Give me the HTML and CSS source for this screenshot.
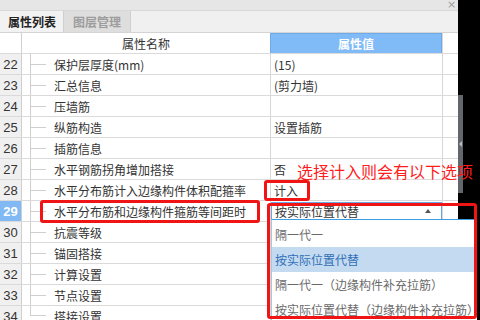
FILE: index.html
```html
<!DOCTYPE html>
<html lang="zh">
<head>
    <meta charset="UTF-8">
    <meta name="viewport" content="width=device-width, initial-scale=1.0">
    <title>属性列表</title>
    <link rel="stylesheet" href="styles.css">
</head>
<body>
    <div class="screen">
        <div class="panel">
            <div class="titlebar"><span class="close">×</span></div>
            <div class="tabs">
                <div class="tab active">属性列表</div>
                <div class="tab">图层管理</div>
            </div>
            <div class="grid">
                <div class="row head">
                    <div class="num"></div>
                    <div class="name">属性名称</div>
                    <div class="value">属性值</div>
                    <div class="pad"></div>
                </div>
                <div class="row">
                    <div class="num">22</div>
                    <div class="name"><span class="tree"><i></i></span>保护层厚度(mm)</div>
                    <div class="value">(15)</div>
                    <div class="pad"></div>
                </div>
                <div class="row">
                    <div class="num">23</div>
                    <div class="name"><span class="tree"><i></i></span>汇总信息</div>
                    <div class="value">(剪力墙)</div>
                    <div class="pad"></div>
                </div>
                <div class="row">
                    <div class="num">24</div>
                    <div class="name"><span class="tree"><i></i></span>压墙筋</div>
                    <div class="value"></div>
                    <div class="pad"></div>
                </div>
                <div class="row">
                    <div class="num">25</div>
                    <div class="name"><span class="tree"><i></i></span>纵筋构造</div>
                    <div class="value">设置插筋</div>
                    <div class="pad"></div>
                </div>
                <div class="row">
                    <div class="num">26</div>
                    <div class="name"><span class="tree"><i></i></span>插筋信息</div>
                    <div class="value"></div>
                    <div class="pad"></div>
                </div>
                <div class="row">
                    <div class="num">27</div>
                    <div class="name"><span class="tree"><i></i></span>水平钢筋拐角增加搭接</div>
                    <div class="value">否</div>
                    <div class="pad"></div>
                </div>
                <div class="row">
                    <div class="num">28</div>
                    <div class="name"><span class="tree"><i></i></span>水平分布筋计入边缘构件体积配箍率</div>
                    <div class="value">计入</div>
                    <div class="pad"></div>
                </div>
                <div class="row current">
                    <div class="num">29</div>
                    <div class="name"><span class="tree"><i></i></span>水平分布筋和边缘构件箍筋等间距时</div>
                    <div class="value">
                        <div class="select"><span>按实际位置代替</span><span class="caret"></span></div>
                    </div>
                    <div class="pad"></div>
                </div>
                <div class="row">
                    <div class="num">30</div>
                    <div class="name"><span class="tree"><i></i></span>抗震等级</div>
                    <div class="value"></div>
                    <div class="pad"></div>
                </div>
                <div class="row">
                    <div class="num">31</div>
                    <div class="name"><span class="tree"><i></i></span>锚固搭接</div>
                    <div class="value"></div>
                    <div class="pad"></div>
                </div>
                <div class="row">
                    <div class="num">32</div>
                    <div class="name"><span class="tree"><i></i></span>计算设置</div>
                    <div class="value"></div>
                    <div class="pad"></div>
                </div>
                <div class="row">
                    <div class="num">33</div>
                    <div class="name"><span class="tree"><i></i></span>节点设置</div>
                    <div class="value"></div>
                    <div class="pad"></div>
                </div>
                <div class="row">
                    <div class="num">34</div>
                    <div class="name"><span class="tree last"><i></i></span>搭接设置</div>
                    <div class="value"></div>
                    <div class="pad"></div>
                </div>
            </div>
        </div>
        <div class="side"><div class="thumb"><span class="arrow"></span></div></div>

        <ul class="dropdown">
            <li>隔一代一</li>
            <li class="selected">按实际位置代替</li>
            <li>隔一代一（边缘构件补充拉筋）</li>
            <li>按实际位置代替（边缘构件补充拉筋）</li>
        </ul>

        <div class="note">选择计入则会有以下选项</div>
        <div class="mark mark-value"></div>
        <div class="mark mark-name"></div>
        <div class="mark mark-list"></div>
    </div>
</body>
</html>
```

FILE: styles.css
```css
body {
    margin: 0;
    background-color: #000;
    font-family: "Noto Sans CJK SC", "Noto Sans", sans-serif;
    font-size: 12px;
    color: #333;
}
.screen {
    position: relative;
    display: flex;
    width: 480px;
    height: 320px;
    overflow: hidden;
}
.panel {
    width: 458px;
    background-color: #fff;
    display: flex;
    flex-direction: column;
    overflow: hidden;
}
.panel > * {
    flex-shrink: 0;
}
.titlebar {
    height: 10px;
    background-color: #e6e6e6;
    position: relative;
}
.close {
    position: absolute;
    left: 447px;
    top: 0;
    font-family: "DejaVu Sans", sans-serif;
    font-size: 11px;
    line-height: 10px;
    color: #a0a0a0;
}
.tabs {
    height: 23px;
    box-sizing: border-box;
    display: flex;
    background-color: #f0f0f0;
    border-top: 1px solid #d8d8d8;
    border-bottom: 1px solid #d4d4d4;
}
.tab {
    display: flex;
    align-items: center;
    padding: 0 9px;
    font-weight: bold;
    color: #9c9c9c;
    background-color: #dedede;
    border-left: 1px solid #cfcfcf;
    border-right: 1px solid #cfcfcf;
    width: 48px;
}
.tab.active {
    color: #222;
    background-color: #f2f2f2;
    border: none;
    padding: 0 7px 0 8px;
}

/* property grid */
.grid {
    display: flex;
    flex-direction: column;
}
.row {
    display: grid;
    grid-template-columns: 22px 248px 172px 16px;
    flex-shrink: 0;
    height: 21px;
    box-sizing: border-box;
    border-bottom: 1px solid #dadada;
}
.num {
    display: flex;
    align-items: center;
    justify-content: center;
    background-color: #f0f0f0;
    border-right: 1px solid #cfcfcf;
    font-family: "Liberation Sans", sans-serif;
    font-size: 13px;
    color: #333;
}
.name {
    display: flex;
    align-items: center;
    white-space: nowrap;
}
.value {
    display: flex;
    align-items: center;
    padding-left: 3px;
    border-left: 1px solid #d6d6d6;
    white-space: nowrap;
}
.pad {
    border-left: 1px solid #d6d6d6;
}
.head .num {
    background-color: #fff;
}
.head .name {
    justify-content: center;
}
.head .value {
    justify-content: center;
    padding-left: 0;
    background-color: #80bbf7;
    border: 1px solid #6ea9e8;
    border-bottom: none;
    color: #fff;
    font-weight: bold;
}
.current .num {
    background-color: #80b9f3;
    color: #fff;
    font-weight: bold;
}
.current .value {
    padding: 0;
    align-items: flex-start;
}
.tree {
    align-self: stretch;
    width: 23px;
    margin-left: 8px;
    border-left: 1px solid #cfcfcf;
    display: flex;
    align-items: center;
}
.tree i {
    display: block;
    width: 15px;
    border-top: 1px solid #cfcfcf;
}
.tree.last {
    align-self: flex-start;
    height: 10px;
    align-items: flex-end;
}
.select {
    display: flex;
    align-items: center;
    justify-content: space-between;
    width: 100%;
    height: 18px;
    margin-top: 1px;
    box-sizing: border-box;
    border: 1px solid #6ca6e2;
    padding: 0 10px 0 3px;
    background-color: #fff;
}
.caret {
    width: 0;
    height: 0;
    border-left: 3px solid transparent;
    border-right: 3px solid transparent;
    border-bottom: 4px solid #555;
}

/* scrollbar strip */
.side {
    width: 22px;
}
.thumb {
    width: 5px;
    height: 98px;
    margin-top: 95px;
    background-color: #62666d;
    display: flex;
    align-items: center;
    justify-content: center;
}
.arrow {
    width: 0;
    height: 0;
    border-top: 3px solid transparent;
    border-bottom: 3px solid transparent;
    border-right: 3px solid #b8bcc2;
}

/* open dropdown list */
.dropdown {
    position: absolute;
    left: 271px;
    top: 219px;
    width: 206px;
    height: 101px;
    margin: 0;
    padding: 2px 0 0 0;
    box-sizing: border-box;
    list-style: none;
    background-color: #fff;
    border-top: 1px solid #3c9de0;
    border-left: 1px solid #a9c4de;
}
.dropdown li {
    height: 25px;
    line-height: 25px;
    padding-left: 3px;
    color: #6a6a6a;
    white-space: nowrap;
}
.dropdown li.selected {
    background-color: #c4daf1;
    color: #2f6fb6;
}

/* red annotations */
.note {
    position: absolute;
    left: 297px;
    top: 162px;
    font-size: 16px;
    line-height: 18px;
    color: #ff1c1c;
    white-space: nowrap;
}
.mark {
    position: absolute;
    box-sizing: border-box;
    border: 3px solid #f01414;
    border-radius: 3px;
}
.mark-value {
    left: 264px;
    top: 180px;
    width: 46px;
    height: 21px;
}
.mark-name {
    left: 40px;
    top: 200px;
    width: 220px;
    height: 23px;
}
.mark-list {
    left: 267px;
    top: 203px;
    width: 210px;
    height: 116px;
}
```
